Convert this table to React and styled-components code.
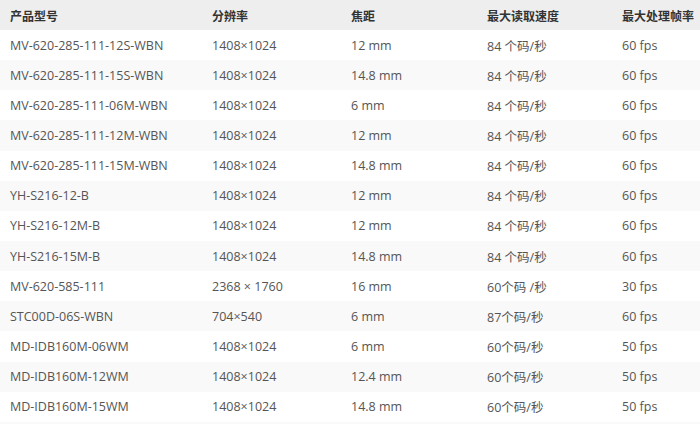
import React from "react";
import styled, { createGlobalStyle } from "styled-components";

const Global = createGlobalStyle`
  html, body { margin: 0; padding: 0; background: #fff; overflow: hidden; }
  body { font-family: "Open Sans", "Noto Sans CJK SC", sans-serif; }
`;

const Table = styled.table`
  width: 700px;
  border-collapse: collapse;
  table-layout: fixed;
  font-size: 12.5px;
  color: #555;
`;

const HeadRow = styled.tr`
  background: #eeeeee;
  height: 30px;
`;

const Th = styled.th`
  text-align: left;
  font-weight: 700;
  color: #333;
  padding: 0 0 0 10px;
  font-family: "Noto Sans CJK SC", sans-serif;
  font-size: 12px;
`;

const Row = styled.tr`
  height: 30.15px;
  background: ${(p) => (p.$alt ? "#f9f9f9" : "#ffffff")};
`;

const Filler = styled.tr`
  height: 2px;
  background: #f9f9f9;
`;

const Td = styled.td`
  padding: 0 0 0 10px;
  white-space: nowrap;
`;

const Empty = styled.td`
  padding: 0;
  height: 2px;
`;

const cols = [202, 139, 136, 135, 88];
const heads = ["产品型号", "分辨率", "焦距", "最大读取速度", "最大处理帧率"];
const rows = [
  ["MV-620-285-111-12S-WBN", "1408×1024", "12 mm", "84 个码/秒", "60 fps"],
  ["MV-620-285-111-15S-WBN", "1408×1024", "14.8 mm", "84 个码/秒", "60 fps"],
  ["MV-620-285-111-06M-WBN", "1408×1024", "6 mm", "84 个码/秒", "60 fps"],
  ["MV-620-285-111-12M-WBN", "1408×1024", "12 mm", "84 个码/秒", "60 fps"],
  ["MV-620-285-111-15M-WBN", "1408×1024", "14.8 mm", "84 个码/秒", "60 fps"],
  ["YH-S216-12-B", "1408×1024", "12 mm", "84 个码/秒", "60 fps"],
  ["YH-S216-12M-B", "1408×1024", "12 mm", "84 个码/秒", "60 fps"],
  ["YH-S216-15M-B", "1408×1024", "14.8 mm", "84 个码/秒", "60 fps"],
  ["MV-620-585-111", "2368 × 1760", "16 mm", "60个码 /秒", "30 fps"],
  ["STC00D-06S-WBN", "704×540", "6 mm", "87个码/秒", "60 fps"],
  ["MD-IDB160M-06WM", "1408×1024", "6 mm", "60个码/秒", "50 fps"],
  ["MD-IDB160M-12WM", "1408×1024", "12.4 mm", "60个码/秒", "50 fps"],
  ["MD-IDB160M-15WM", "1408×1024", "14.8 mm", "60个码/秒", "50 fps"],
];

export default function App() {
  return (
    <>
      <Global />
      <Table>
        <colgroup>
          {cols.map((w, i) => (
            <col key={i} style={{ width: w }} />
          ))}
        </colgroup>
        <thead>
          <HeadRow>
            {heads.map((h) => (
              <Th key={h}>{h}</Th>
            ))}
          </HeadRow>
        </thead>
        <tbody>
          {rows.map((r, i) => (
            <Row key={i} $alt={i % 2 === 1}>
              {r.map((c, j) => (
                <Td key={j}>{c}</Td>
              ))}
            </Row>
          ))}
          <Filler>
            <Empty colSpan={5} />
          </Filler>
        </tbody>
      </Table>
    </>
  );
}
